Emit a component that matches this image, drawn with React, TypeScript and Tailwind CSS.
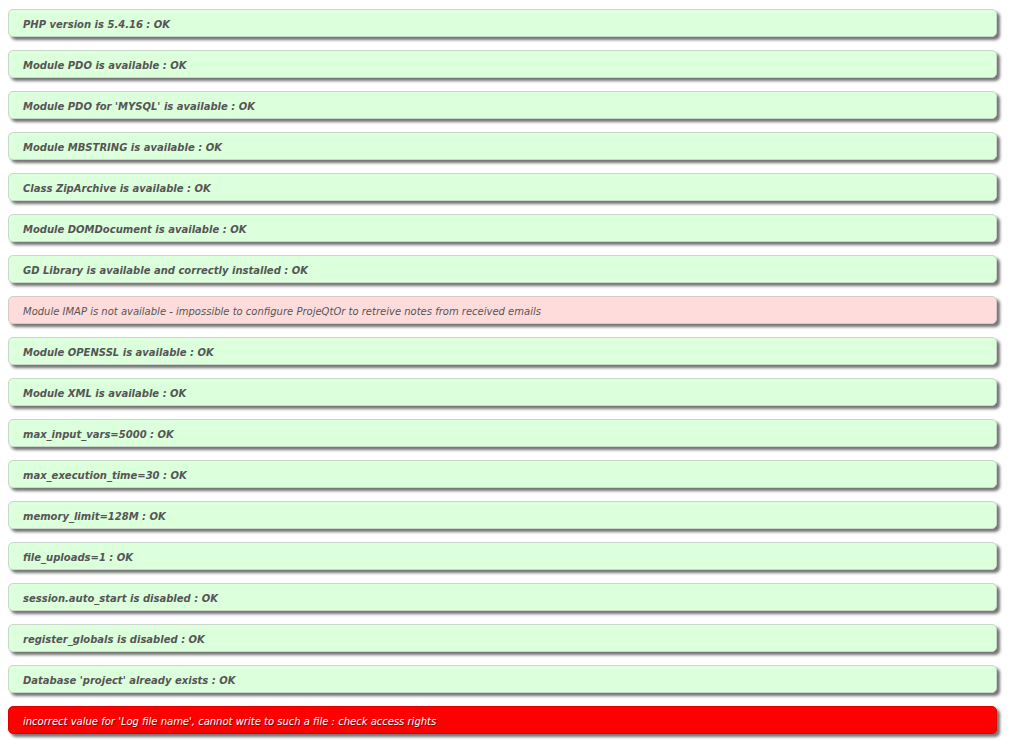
import React from 'react';

interface Check {
  text: string;
  status: 'ok' | 'warn' | 'error';
}

const checks: Check[] = [
  { text: 'PHP version is 5.4.16 : OK', status: 'ok' },
  { text: 'Module PDO is available : OK', status: 'ok' },
  { text: "Module PDO for 'MYSQL' is available : OK", status: 'ok' },
  { text: 'Module MBSTRING is available : OK', status: 'ok' },
  { text: 'Class ZipArchive is available : OK', status: 'ok' },
  { text: 'Module DOMDocument is available : OK', status: 'ok' },
  { text: 'GD Library is available and correctly installed : OK', status: 'ok' },
  { text: 'Module IMAP is not available - impossible to configure ProjeQtOr to retreive notes from received emails', status: 'warn' },
  { text: 'Module OPENSSL is available : OK', status: 'ok' },
  { text: 'Module XML is available : OK', status: 'ok' },
  { text: 'max_input_vars=5000 : OK', status: 'ok' },
  { text: 'max_execution_time=30 : OK', status: 'ok' },
  { text: 'memory_limit=128M : OK', status: 'ok' },
  { text: 'file_uploads=1 : OK', status: 'ok' },
  { text: 'session.auto_start is disabled : OK', status: 'ok' },
  { text: 'register_globals is disabled : OK', status: 'ok' },
  { text: "Database 'project' already exists : OK", status: 'ok' },
  { text: "incorrect value for 'Log file name', cannot write to such a file : check access rights", status: 'error' },
];

const boxStyle: Record<Check['status'], string> = {
  ok: 'bg-[#dcffdc] border-[#c8d8c8] text-[#555555] font-bold',
  warn: 'bg-[#ffdcdc] border-[#d8c8c8] text-[#555555] font-normal',
  error: 'bg-[#ff0000] border-[#e00000] text-white font-normal [text-shadow:1px_1px_1px_rgba(0,0,0,0.5)]',
};

const App: React.FC = () => {
  return (
    <div className="min-h-screen bg-white pt-[9px] pb-4 pl-[8px] pr-[17px] flex flex-col gap-[13px] font-['DejaVu_Sans',Verdana,sans-serif]">
      {checks.map((c, i) => (
        <div
          key={i}
          className={`h-[28px] flex items-center pl-[14px] pt-[2px] border rounded-[5px] shadow-[3px_3px_3px_rgba(0,0,0,0.55)] italic text-[10px] ${boxStyle[c.status]}`}
        >
          {c.text}
        </div>
      ))}
    </div>
  );
};

export default App;
